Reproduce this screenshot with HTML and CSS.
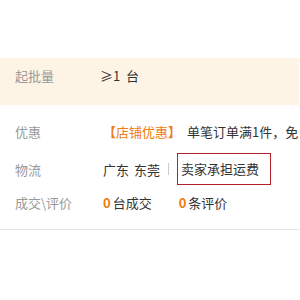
FILE: index.html
```html
<!DOCTYPE html>
<html>
<head>
<meta charset="utf-8">
<link rel="stylesheet" href="styles.css">
</head>
<body>
<div class="panel">
  <div class="row band">
    <div class="label">起批量</div>
    <div class="value">≥1&nbsp;&nbsp;台</div>
  </div>
  <div class="row promo">
    <div class="label">优惠</div>
    <div class="value"><span class="orange b">【</span><span class="orange">店铺优惠</span><span class="orange b br">】</span>单笔订单满1件，免运费</div>
  </div>
  <div class="row ship">
    <div class="label">物流</div>
    <div class="value"><span>广东</span><span class="city">东莞</span><span class="sep"></span><span class="box">卖家承担运费</span></div>
  </div>
  <div class="row deal">
    <div class="label">成交\评价</div>
    <div class="value"><span class="num">0</span>台成交<span class="num gap">0</span>条评价</div>
  </div>
</div>
</body>
</html>
```

FILE: styles.css
```css
html, body {
  margin: 0;
  padding: 0;
  background: #fff;
}
body {
  font-family: "Noto Sans CJK SC", "Liberation Sans", sans-serif;
  font-size: 13px;
  color: #333;
}
.panel {
  padding-top: 58px;
  width: 299px;
  border-bottom: 1px solid #e2e2e2;
  padding-bottom: 15px;
}
.row {
  display: flex;
  align-items: center;
  white-space: nowrap;
  overflow: hidden;
}
.label {
  width: 88px;
  padding-left: 15px;
  flex: none;
  color: #999;
}
.value {
  flex: none;
  display: flex;
  align-items: center;
}
.band {
  background: #fdf4e5;
  height: 47px;
  align-items: flex-start;
  padding-top: 8px;
  box-sizing: border-box;
}
.band .value {
  margin-left: -3px;
}
.promo {
  height: 24px;
  margin-top: 14px;
}
.ship {
  height: 32px;
  margin-top: 10px;
}
.deal {
  height: 24px;
  margin-top: 5px;
}
.orange {
  color: #f07b10;
}
.b {
  font-weight: bold;
}
.br {
  margin-right: 6px;
}
.city {
  margin-left: 5px;
}
.sep {
  width: 1px;
  height: 12px;
  background: #ccc;
  margin: 0 8px 0 8px;
}
.box {
  border: 1px solid #b5222b;
  padding: 0 3px;
  height: 30px;
  line-height: 30px;
  width: 86px;
}
.num {
  color: #f07b10;
  font-weight: bold;
  margin-right: 2px;
}
.num.gap {
  margin-left: 27px;
}
```
